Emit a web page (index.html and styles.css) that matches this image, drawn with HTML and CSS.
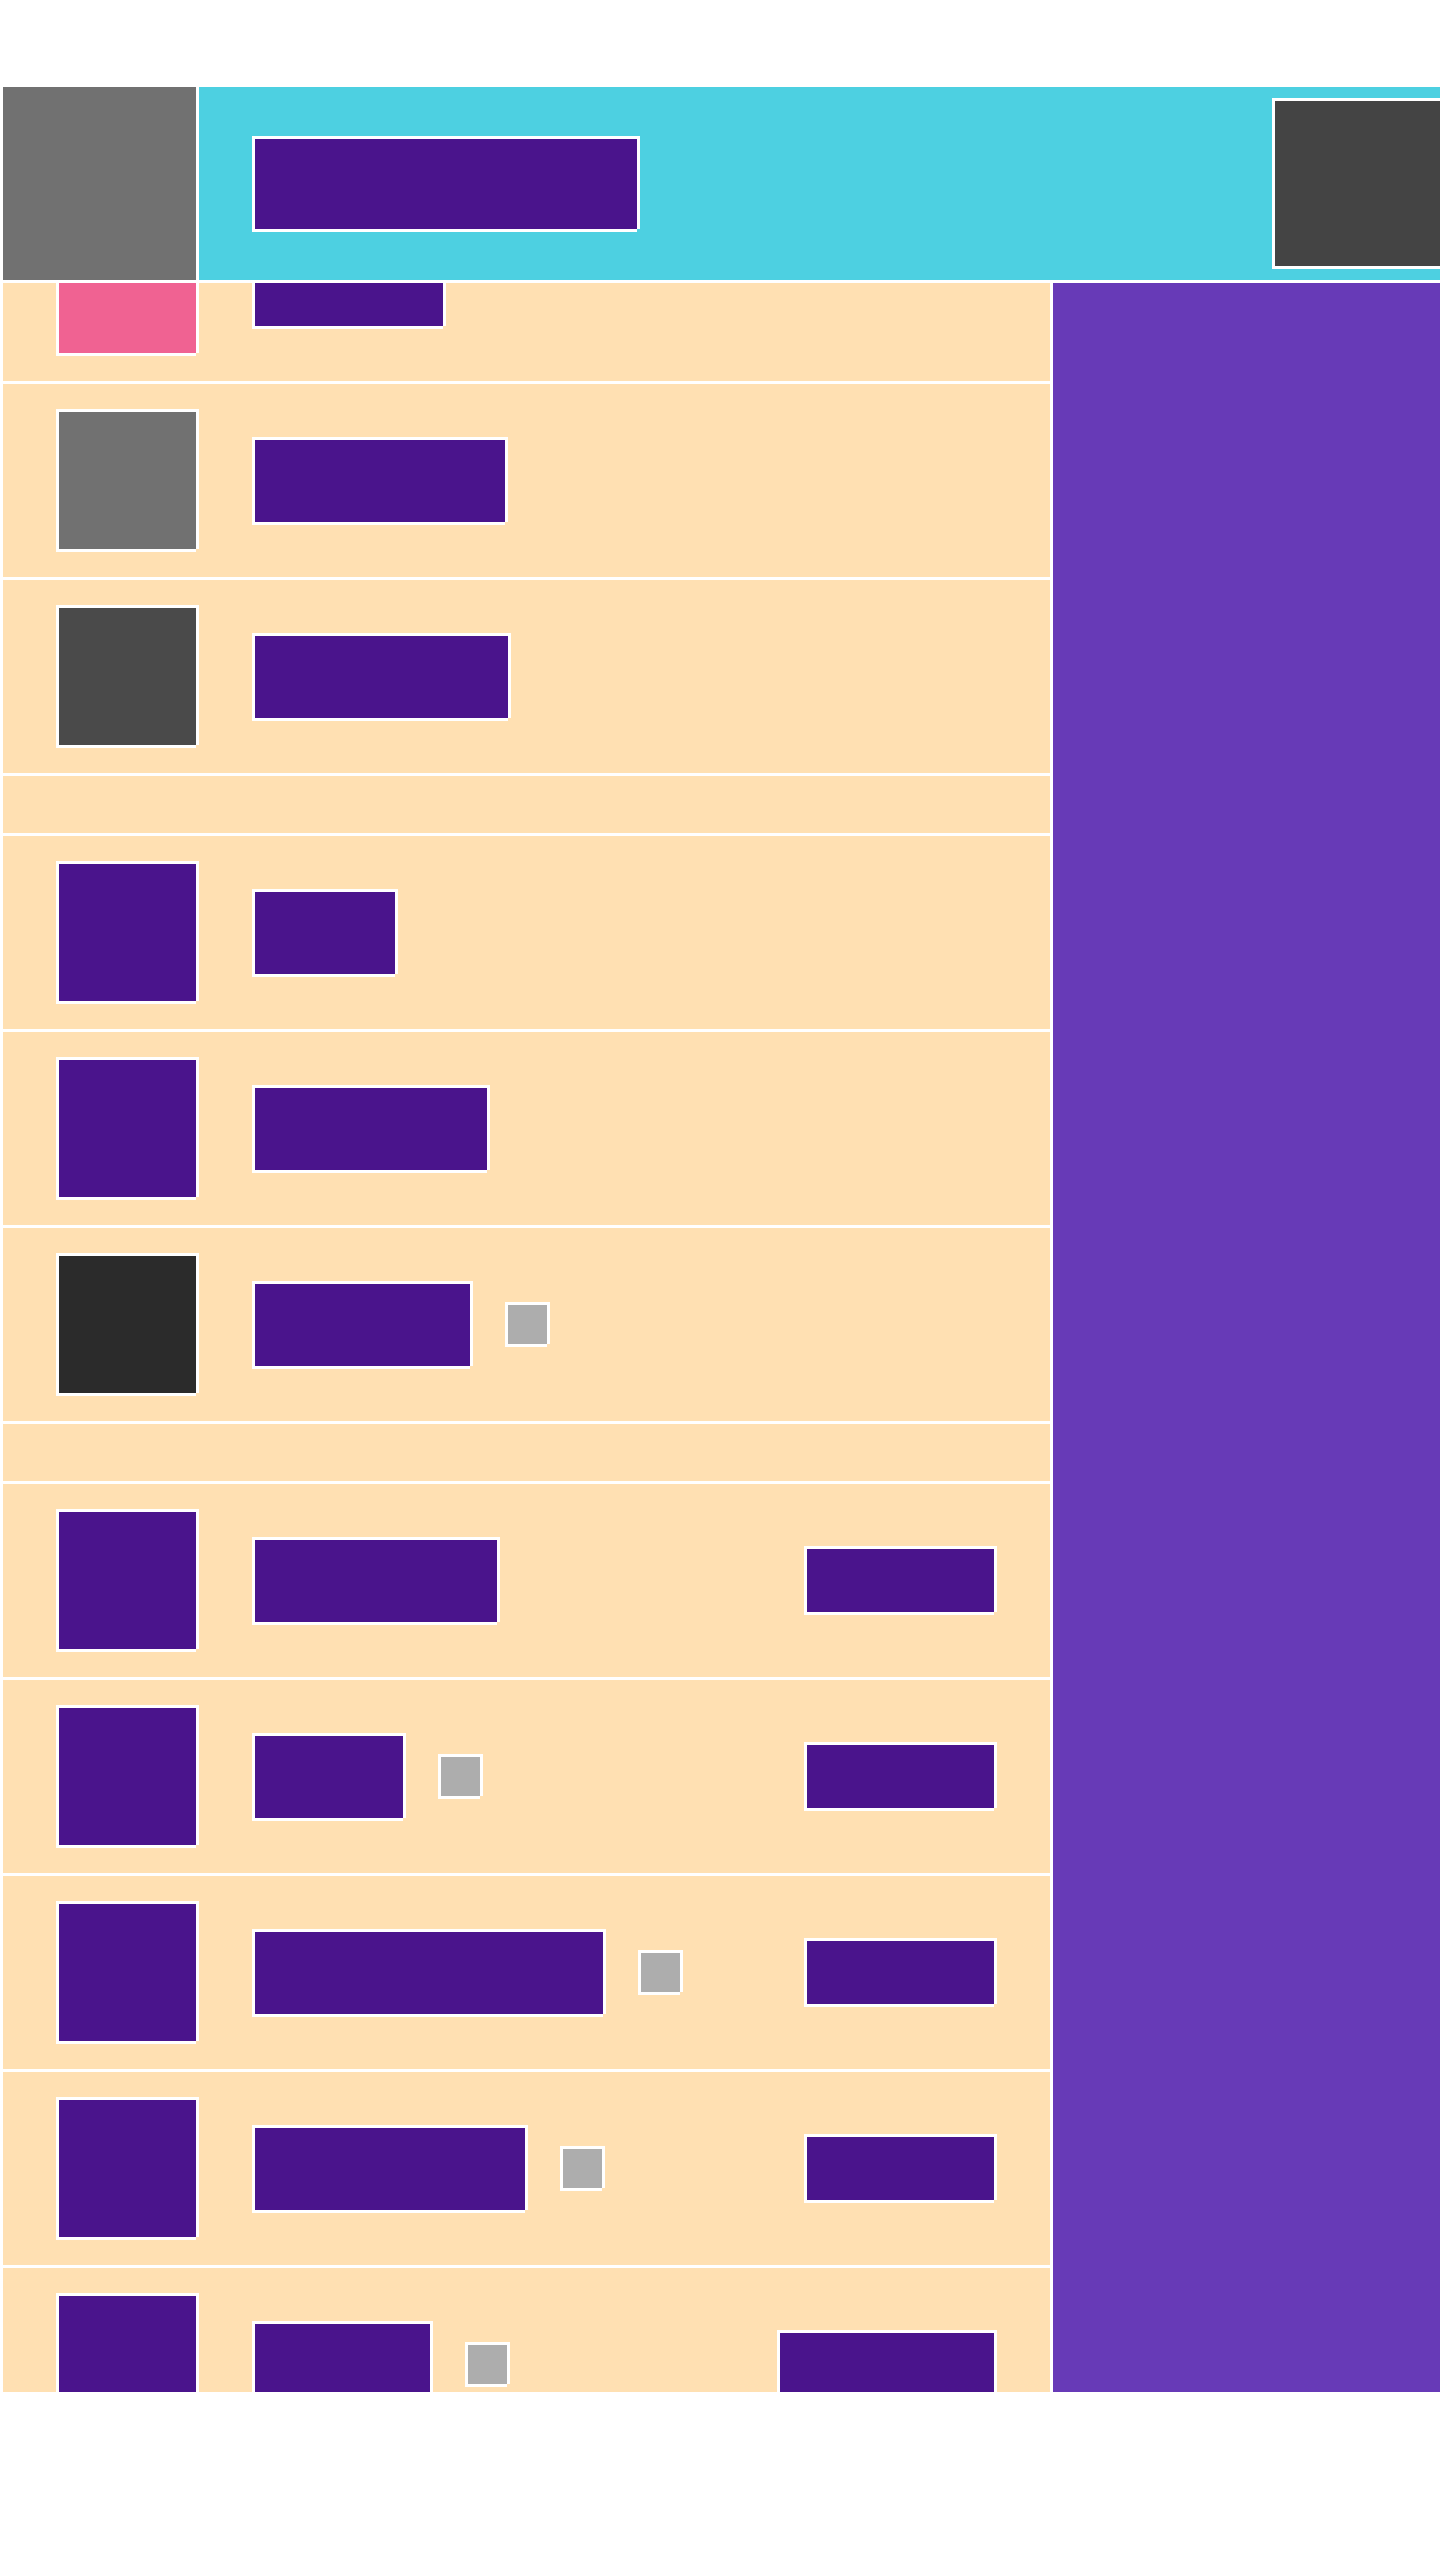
FILE: index.html
```html
<!doctype html>
<html>
<head>
<meta charset="utf-8">
<title>List</title>
<link rel="stylesheet" href="styles.css">
</head>
<body>
<div class="page">
    <div class="top">
        <div class="logo"></div>
        <div class="bar">
            <div class="box title"></div>
            <div class="box avatar"></div>
        </div>
    </div>
    <div class="main">
        <div class="list">
            <div class="scroll">
                <div class="row"><div class="box thumb pink"></div><div class="box label" style="width:188px"></div></div>
                <div class="row"><div class="box thumb gray"></div><div class="box label" style="width:250px"></div></div>
                <div class="row"><div class="box thumb graphite"></div><div class="box label" style="width:253px"></div></div>
                <div class="section"></div>
                <div class="row"><div class="box thumb"></div><div class="box label" style="width:140px"></div></div>
                <div class="row"><div class="box thumb"></div><div class="box label" style="width:232px"></div></div>
                <div class="row"><div class="box thumb ink"></div><div class="box label" style="width:215px"></div><div class="box chip"></div></div>
                <div class="section"></div>
                <div class="row"><div class="box thumb"></div><div class="box label" style="width:242px"></div><div class="box tag"></div></div>
                <div class="row"><div class="box thumb"></div><div class="box label" style="width:148px"></div><div class="box chip"></div><div class="box tag"></div></div>
                <div class="row"><div class="box thumb"></div><div class="box label" style="width:348px"></div><div class="box chip"></div><div class="box tag"></div></div>
                <div class="row"><div class="box thumb"></div><div class="box label" style="width:270px"></div><div class="box chip"></div><div class="box tag"></div></div>
                <div class="row"><div class="box thumb"></div><div class="box label" style="width:175px"></div><div class="box chip"></div><div class="box tag" style="width:214px"></div></div>
            </div>
        </div>
        <div class="side"></div>
    </div>
</div>
</body>
</html>
```
FILE: styles.css
```css
html,body{
    margin: 0;
    background-color: #ffffff;
    font-family: "Liberation Sans", Arial, sans-serif;
}
.page{
    padding: 87px 0 0 3px;
}

/* boxes: white frame, missing bottom-right corner */
.box{
    flex: none;
    border-top: 3px solid #ffffff;
    border-left: 3px solid #ffffff;
    box-shadow: 3px 0 0 #ffffff, 0 3px 0 #ffffff;
    margin: 0 3px 3px 0;
    background-color: #4a148c;
}

.top{
    display: flex;
    gap: 3px;
    height: 193px;
}
.logo{
    width: 193px;
    flex: none;
    background-color: #717171;
}
.bar{
    flex: 1;
    display: flex;
    align-items: center;
    padding-left: 53px;
    background-color: #4dd0e1;
    overflow: hidden;
}
.title{
    width: 382px;
    height: 90px;
}
.avatar{
    width: 165px;
    height: 165px;
    margin: 0 0 3px auto;
    background-color: #444444;
}

.main{
    display: flex;
    gap: 3px;
    margin-top: 3px;
    height: 2109px;
}
.list{
    width: 1047px;
    flex: none;
    overflow: hidden;
}
.scroll{
    display: flex;
    flex-direction: column;
    gap: 3px;
    margin-top: -95px;
}
.side{
    flex: 1;
    background-color: #673ab7;
}

.row{
    display: flex;
    align-items: center;
    height: 193px;
    padding: 0 53px;
    background-color: #ffe0b2;
}
.section{
    height: 57px;
    background-color: #ffe0b2;
}
.thumb{
    width: 137px;
    height: 137px;
}
.thumb.pink{ background-color: #f06292; }
.thumb.gray{ background-color: #717171; }
.thumb.graphite{ background-color: #4a4a4a; }
.thumb.ink{ background-color: #2b2b2b; }
.label{
    height: 82px;
    margin-left: 53px;
}
.chip{
    width: 39px;
    height: 39px;
    margin-left: 32px;
    background-color: #adadad;
}
.tag{
    width: 187px;
    height: 63px;
    margin-left: auto;
}
```
